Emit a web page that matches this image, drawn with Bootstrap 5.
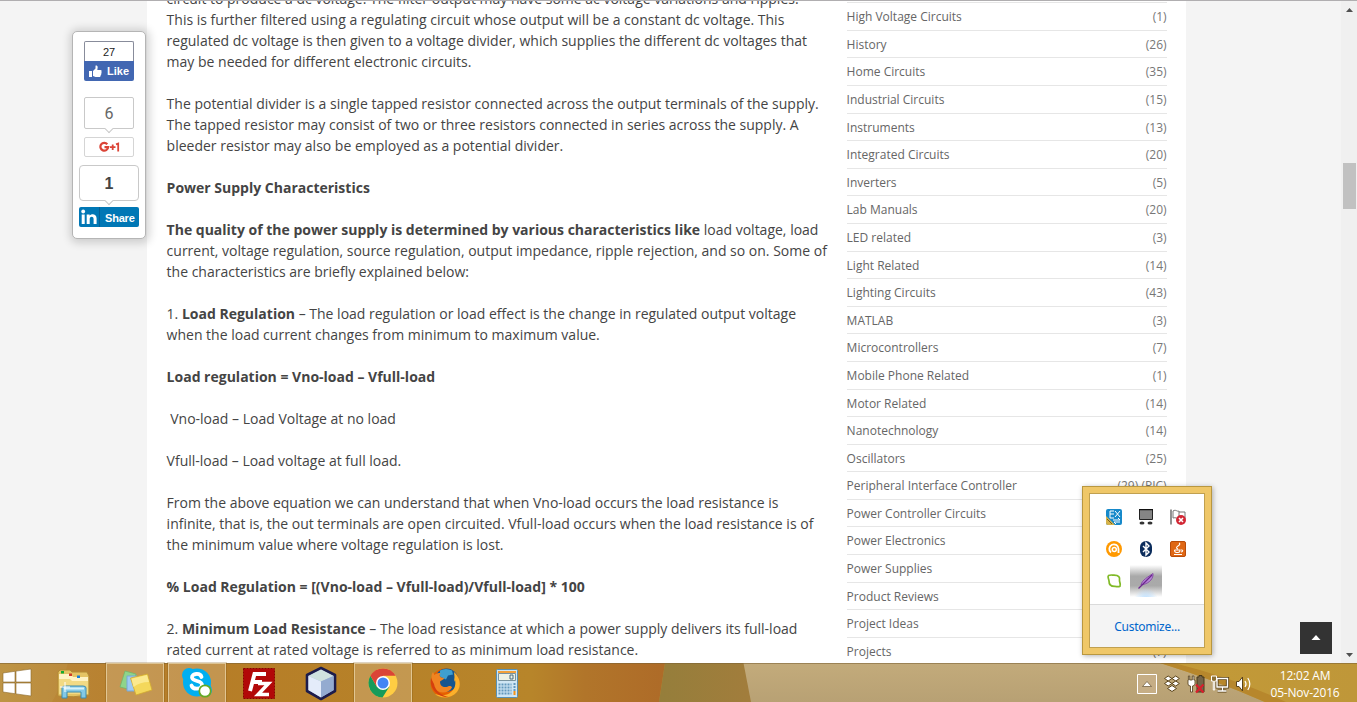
<!DOCTYPE html>
<html lang="en">
<head>
<meta charset="utf-8">
<title>Power Supply Characteristics</title>
<link href="https://cdn.jsdelivr.net/npm/bootstrap@5.3.0/dist/css/bootstrap.min.css" rel="stylesheet">
<script src="https://cdn.jsdelivr.net/npm/bootstrap@5.3.0/dist/js/bootstrap.bundle.min.js"></script>
<style>
html,body{height:702px;overflow:hidden}
body{font-family:"Open Sans","Noto Sans",sans-serif;background:#f4f4f4;width:1357px}
.browser{height:663px;border-top:1px solid #b0aeb0;overflow:hidden}
.sheet{width:1039px;margin-left:147px;padding:0 20px 0 19.6px;height:662px;overflow:hidden}
.article{width:680px;font-size:14px;line-height:21px;color:#444;margin-top:-13px;white-space:nowrap}
.article p{margin-bottom:21px}
.cats{width:320px;font-size:12px;color:#666;margin-top:-25.4px}
.cats li{height:27.6px;border-bottom:1px solid #e6e6e6;padding-top:1px;line-height:26px;white-space:nowrap}
.cats li span+span{color:#777}
.scroll{width:16px;background:#f0f0f0}
.thumb{width:13px;height:46px;margin:148px 1px 0 2px;background:#c1c1c1}
.share{left:72px;top:31px;width:74px;height:208px;border:1px solid #b5b5b5;border-radius:5px;box-shadow:1px 1px 8px 3px rgba(0,0,0,.16);font-family:"Liberation Sans",sans-serif}
.fbcount{width:50px;height:20px;border:1px solid #888c9b;border-bottom:0;border-radius:2px 2px 0 0;font-size:11px;line-height:21px;margin-top:9px;color:#222}
.fblike{width:50px;height:20px;background:#4267b2;border-radius:0 0 2px 2px;color:#fff;font-size:11px;font-weight:700;padding:0 5px}
.bubble{border:1px solid #c9c9c9;border-radius:2px;text-align:center}
.bubble:after{content:"";position:absolute;left:50%;bottom:-4px;width:6px;height:6px;margin-left:-3px;background:#fff;border:solid #c9c9c9;border-width:0 1px 1px 0;transform:rotate(45deg)}
.gcount{width:50px;height:32px;margin-top:16px;font:16px/31px Roboto,sans-serif;color:#666}
.gplus{width:50px;height:20px;margin-top:8px;border:1px solid #d5d5d5;border-radius:2px}
.incount{width:60px;height:36px;margin-top:8px;border-radius:4px;font-size:16px;font-weight:700;line-height:35px;color:#444}
.inshare{width:60px;height:20px;margin-top:6px;background:#0077b5;border-radius:2px;color:#fff;font-size:11px;font-weight:700}
.inshare span{border-left:1px solid #066094;padding-left:5px;line-height:22px;height:20px;letter-spacing:-.2px}
.totop{left:1300px;top:622px;width:32px;height:32px;background:#333}
.tray{left:1082px;top:486px;width:130px;height:169px;background:#efc768;border:1px solid #b9973f;padding:6px;box-shadow:1px 1px 5px rgba(0,0,0,.3)}
.panel{border:1px solid #c0a050;height:155px}
.icons{display:grid;grid-template-columns:repeat(3,32px);grid-auto-rows:32px;padding:7px 0 0 8px;height:110px}
.icons>div{display:flex;align-items:center;justify-content:center}
.hot{background:radial-gradient(circle at 50% 110%,#b5dcff 0,rgba(181,220,255,0) 12px),linear-gradient(#fff,#a9a9a9 35%,#aaa 65%,#fff)}
.custom{border-top:1px solid #dadada;background:#f4f4f4;height:43px;font-size:12px;line-height:43px;color:#06c;font-family:"Noto Sans",sans-serif;letter-spacing:-.25px}
.taskbar{height:39px;background:#b88a2e}
.wall{left:0;top:0}
.task{width:58px;height:39px;border:1px solid transparent;border-bottom:0}
.task.open{background:rgba(214,186,140,.4);border-color:rgba(235,213,168,.75);box-shadow:0 0 0 1px rgba(120,80,10,.25)}
.tasks{gap:4px}
.notif{left:1137px;top:0;height:39px;width:120px}
.clock{left:1262px;top:4px;width:86px;height:36px;color:#fff;font:12px/17px "Open Sans",sans-serif;letter-spacing:-.2px;text-align:center}
</style>
</head>
<body class="position-relative">
<div class="browser d-flex">
  <div class="sheet bg-white d-flex">
    <div class="article flex-shrink-0">
      <p>circuit to produce a dc voltage. The filter output may have some ac voltage variations and ripples.<br>This is further filtered using a regulating circuit whose output will be a constant dc voltage. This<br>regulated dc voltage is then given to a voltage divider, which supplies the different dc voltages that<br>may be needed for different electronic circuits.</p>
      <p>The potential divider is a single tapped resistor connected across the output terminals of the supply.<br>The tapped resistor may consist of two or three resistors connected in series across the supply. A<br>bleeder resistor may also be employed as a potential divider.</p>
      <p><b>Power Supply Characteristics</b></p>
      <p><b>The quality of the power supply is determined by various characteristics like</b> load voltage, load<br>current, voltage regulation, source regulation, output impedance, ripple rejection, and so on. Some of<br>the characteristics are briefly explained below:</p>
      <p>1. <b>Load Regulation</b> – The load regulation or load effect is the change in regulated output voltage<br>when the load current changes from minimum to maximum value.</p>
      <p><b>Load regulation = Vno-load – Vfull-load</b></p>
      <p>&nbsp;Vno-load – Load Voltage at no load</p>
      <p>Vfull-load – Load voltage at full load.</p>
      <p>From the above equation we can understand that when Vno-load occurs the load resistance is<br>infinite, that is, the out terminals are open circuited. Vfull-load occurs when the load resistance is of<br>the minimum value where voltage regulation is lost.</p>
      <p><b>% Load Regulation = [(Vno-load – Vfull-load)/Vfull-load] * 100</b></p>
      <p>2. <b>Minimum Load Resistance</b> – The load resistance at which a power supply delivers its full-load<br>rated current at rated voltage is referred to as minimum load resistance.</p>
    </div>
    <ul class="cats list-unstyled mb-0 flex-shrink-0">
      <li></li>
      <li class="d-flex justify-content-between"><span>High Voltage Circuits</span><span>(1)</span></li>
      <li class="d-flex justify-content-between"><span>History</span><span>(26)</span></li>
      <li class="d-flex justify-content-between"><span>Home Circuits</span><span>(35)</span></li>
      <li class="d-flex justify-content-between"><span>Industrial Circuits</span><span>(15)</span></li>
      <li class="d-flex justify-content-between"><span>Instruments</span><span>(13)</span></li>
      <li class="d-flex justify-content-between"><span>Integrated Circuits</span><span>(20)</span></li>
      <li class="d-flex justify-content-between"><span>Inverters</span><span>(5)</span></li>
      <li class="d-flex justify-content-between"><span>Lab Manuals</span><span>(20)</span></li>
      <li class="d-flex justify-content-between"><span>LED related</span><span>(3)</span></li>
      <li class="d-flex justify-content-between"><span>Light Related</span><span>(14)</span></li>
      <li class="d-flex justify-content-between"><span>Lighting Circuits</span><span>(43)</span></li>
      <li class="d-flex justify-content-between"><span>MATLAB</span><span>(3)</span></li>
      <li class="d-flex justify-content-between"><span>Microcontrollers</span><span>(7)</span></li>
      <li class="d-flex justify-content-between"><span>Mobile Phone Related</span><span>(1)</span></li>
      <li class="d-flex justify-content-between"><span>Motor Related</span><span>(14)</span></li>
      <li class="d-flex justify-content-between"><span>Nanotechnology</span><span>(14)</span></li>
      <li class="d-flex justify-content-between"><span>Oscillators</span><span>(25)</span></li>
      <li class="d-flex justify-content-between"><span>Peripheral Interface Controller</span><span>(29) (PIC)</span></li>
      <li class="d-flex justify-content-between"><span>Power Controller Circuits</span></li>
      <li class="d-flex justify-content-between"><span>Power Electronics</span></li>
      <li class="d-flex justify-content-between"><span>Power Supplies</span></li>
      <li class="d-flex justify-content-between"><span>Product Reviews</span></li>
      <li class="d-flex justify-content-between"><span>Project Ideas</span></li>
      <li class="d-flex justify-content-between"><span>Projects</span><span>(7)</span></li>
    </ul>
  </div>
  <div class="scroll ms-auto d-flex flex-column">
    <svg width="16" height="14"><path d="M5 11h7L8.500 7z" fill="#505050"/></svg>
    <div class="thumb"></div>
    <svg class="mt-auto" width="16" height="16"><path d="M5 6h7L8.500 10z" fill="#505050"/></svg>
  </div>
</div>

<div class="share position-absolute bg-white d-flex flex-column align-items-center">
  <div class="fbcount text-center">27</div>
  <div class="fblike d-flex align-items-center justify-content-between">
    <svg width="13" height="13" viewBox="0 0 13 13" fill="#fff"><path d="M0 6h3v6H0zM4 6l2.500-2.500V.8C7 0 8.700.5 8.700 2.200L8.300 5H11.500c1.300 0 1.500 1.400.7 1.900.8.500.6 1.600-.2 1.800.5.700.2 1.500-.5 1.700.3.800-.2 1.600-1.200 1.600H6.500L4 11z"/></svg>Like
  </div>
  <div class="bubble gcount position-relative">6</div>
  <div class="gplus d-flex align-items-center justify-content-center">
    <svg width="21" height="12" viewBox="0 0 21 12" fill="none" stroke="#db4437"><path d="M8.300 3.200A3.900 3.900 0 1 0 9.200 6.200H5.500" stroke-width="2.200"/><path d="M11 6.200h5.500M13.700 3.500v5.400" stroke-width="1.800"/><path d="M17 3.300l2.200-.8v8" stroke-width="1.800"/></svg>
  </div>
  <div class="bubble incount position-relative">1</div>
  <div class="inshare d-flex">
    <svg width="20" height="20" viewBox="0 0 20 20" fill="#fff"><circle cx="4.200" cy="4.500" r="1.900"/><path d="M2.700 7.500h3V17h-3zM7.700 7.500h2.900v1.300c1.500-2.400 7-2.200 7 2.500V17h-3v-5c0-3.200-3.900-2.900-3.900 0v5h-3z"/></svg>
    <span>Share</span>
  </div>
</div>

<div class="totop position-absolute"><svg class="d-block" width="32" height="32"><path d="M11.500 18L16 13l4.500 5z" fill="#fff"/></svg></div>

<div class="tray position-absolute">
  <div class="panel bg-white">
    <div class="icons">
      <div><svg width="16" height="16"><rect width="16" height="16" rx="2" fill="#1689ca"/><path d="M0 7l9 9H2q-2 0-2-2z" fill="#d7b34a"/><path d="M1 10l5 5" stroke="#765f22"/><path d="M4 2h4M4 5h4M4 9h4M4 2v7M9 2l5 6M14 2L9 8M7 11h7l-2-2M14 13H8l2 2" stroke="#fff" fill="none" stroke-width="1"/></svg></div>
      <div><svg width="16" height="16"><path d="M1.500.5h13v10h-13z" fill="#858585" stroke="#222"/><path d="M1 .5h14" stroke="#111" stroke-width="1.500"/><ellipse cx="4" cy="14" rx="2.500" ry="1.600" fill="#333"/><ellipse cx="12" cy="14" rx="2.500" ry="1.600" fill="#333"/></svg></div>
      <div><svg width="16" height="16"><path d="M1 .5v15" stroke="#777" stroke-width="1.600"/><path d="M3 2c3-2 4 1 6 0v7c-2 1-3-1-6 0zM9 3h6v7H9" fill="#fff" stroke="#777"/><circle cx="11" cy="11" r="5" fill="#d22735"/><path d="M9 9l4 4M13 9l-4 4" stroke="#fff" stroke-width="1.600"/></svg></div>
      <div><svg width="16" height="16"><circle cx="8" cy="8" r="8" fill="#f90"/><path d="M5 11.500A4.600 4.600 0 1 1 12.500 8v4" fill="none" stroke="#fff" stroke-width="1.800"/><circle cx="8.300" cy="8.500" r="2" fill="none" stroke="#fff" stroke-width="1.500"/></svg></div>
      <div><svg width="16" height="16"><rect x="2" width="12" height="16" rx="6" fill="#0b2c5c"/><path d="M5 5l6 6-3 3V2l3 3-6 6" fill="none" stroke="#fff" stroke-width="1.400"/></svg></div>
      <div><svg width="16" height="16"><rect x=".5" y=".5" width="15" height="15" rx="1.500" fill="#df6714" stroke="#b94c0a"/><path d="M9 2q2 1-1 3t0 3M4.500 9h5.500q0 2.500-2 2.500H6.500q-2 0-2-2.500M11 9c2.500-.5 2 2 0 2M4 13.500h8" fill="none" stroke="#fff" stroke-width="1.100"/></svg></div>
      <div><svg width="16" height="16"><path d="M2.500 2.500C5 1.500 6 2.200 8 2.200c5 0 6 2 5.500 5-.3 2 1.500 3 .5 6-2 1-3 .2-5 .2-5 0-6-2.400-6-5.400 0-2-2-4-.5-5.500z" fill="#fff" stroke="#80ba27" stroke-width="1.700"/></svg></div>
      <div class="hot"><svg width="16" height="16"><path d="M3 12C4 7 10 4 15 .5 15.500 5 12 10 5 11.500z" fill="#b98ad6" stroke="#7b3aa0" stroke-width=".8"/><path d="M.5 15.500L14 2" stroke="#6c268e" stroke-width="1.200"/></svg></div>
    </div>
    <div class="custom text-center">Customize...</div>
  </div>
</div>

<div class="taskbar position-relative">
  <svg class="wall position-absolute" width="1357" height="39" preserveAspectRatio="none">
    <defs>
      <linearGradient id="w1"><stop offset="0" stop-color="#bc9140"/><stop offset=".1" stop-color="#b98435"/><stop offset=".3" stop-color="#b67d27"/><stop offset=".8" stop-color="#b7852a"/><stop offset=".88" stop-color="#b1752a"/><stop offset="1" stop-color="#ae6b28"/></linearGradient>
      <linearGradient id="w2"><stop offset="0" stop-color="#957e3b"/><stop offset="1" stop-color="#a27d3c"/></linearGradient>
      <linearGradient id="w3" x1="0" y1="0" x2=".1" y2="1"><stop offset="0" stop-color="#c3ab7b"/><stop offset="1" stop-color="#b8a174"/></linearGradient>
      <linearGradient id="w4"><stop offset="0" stop-color="#c39a37"/><stop offset="1" stop-color="#bf9739"/></linearGradient>
    </defs>
    <path d="M0 0h665l-6 39H0z" fill="url(#w1)"/>
    <path d="M0 0h68Q63 20 52 39H0z" fill="#c5a052" opacity=".25"/>
    <path d="M665 0h79l8 39h-93z" fill="url(#w2)"/>
    <path d="M743.500 0H1357v39H751z" fill="url(#w3)"/>
    <path d="M1160 0h197v39h-92Q1215 17 1160 0z" fill="url(#w4)"/>
    <path d="M1160 0h14q60 15 112 39h-21Q1215 17 1160 0z" fill="#b7872c"/>
    <path d="M0 .5h1357" stroke="#7b6237" opacity=".55"/>
  </svg>
  <div class="tasks position-relative d-flex align-items-stretch">
    <div style="width:40px"><svg width="40" height="39"><path d="M3 10l12-1.700V19H3zM16 8.100L31 6v13H16zM3 20h12v10.700L3 29zM16 20h15v13l-15-2.100z" fill="#fff" stroke="#8c692c" stroke-width=".6"/></svg></div>
    <div class="task"><svg width="56" height="38"><path d="M13 8l2-2h10l2 2h15l2 4v19q-15 3-31 1z" fill="#e5c464" stroke="#b28a35"/><path d="M14 10h12l2 3h15v16H14z" fill="#fff3c4"/><path d="M16 7h3v2.500h-3z" fill="#14ab2e"/><path d="M24 9.500h3V12h-3z" fill="#d03a28"/><path d="M32 11.500h3V14h-3z" fill="#1980d8"/><path d="M14 15h11l2 2h16v13H14z" fill="#f2da84"/><path d="M17 24q0-2 3-2h18q3 0 3 2v10h-5v-6H22v6h-5z" fill="#83c9e6" stroke="#3f8caf"/><path d="M19 24.500h20" stroke="#d5f2fc" stroke-width="2"/><path d="M20 18v10M15 23h10" stroke="#fff"/></svg></div>
    <div class="task open"><svg width="56" height="38"><path d="M18 7l11 3-4 16-12-3z" fill="#8fd48a" stroke="#6bb56b" stroke-width=".7"/><path d="M20 12h10v15H20z" fill="#9ecaf3" stroke="#76a9d5"/><path d="M23.500 14l17-4 4.500 16-16 5z" fill="#f4d85b" stroke="#d2ab30" stroke-width=".8"/><path d="M24.500 14.700l15.500-3.700 2 7q-9 0-15.500 5z" fill="#fbe98f"/></svg></div>
    <div class="task open"><svg width="56" height="38"><circle cx="20" cy="11" r="7" fill="#00aff0"/><circle cx="28" cy="18.500" r="14" fill="#00aff0"/><circle cx="36" cy="26" r="7" fill="#00aff0"/><path d="M32.500 13c-1-4.500-10-3.700-9.500.6.600 4.400 10.500 2.500 10 7.500-.5 4.800-9.500 4.700-10.500.4" fill="none" stroke="#fff" stroke-width="3.800" stroke-linecap="round"/><circle cx="36" cy="27" r="5.700" fill="#fff" stroke="#65a923" stroke-width="1.700"/></svg></div>
    <div class="task"><svg width="56" height="38"><path d="M12.500 4.500h31v30h-31z" fill="#b20808" stroke="#8b0000" stroke-dasharray="2 1"/><path d="M19 27l4.500-17H35M22 18h9" fill="none" stroke="#fff" stroke-width="4"/><path d="M27 19.500h10.500L27 30.500h11" fill="none" stroke="#fff" stroke-width="3.500"/></svg></div>
    <div class="task"><svg width="56" height="38"><path d="M28 4l14 7v16l-14 8-14-8V11z" fill="#a5b7db" stroke="#1d1c4b" stroke-width="2.600" stroke-linejoin="round"/><path d="M28 5.500L40.500 12 28 17.500 15.500 12z" fill="#cfe1df"/><path d="M15.500 12L28 17.500V33.500L15.500 26z" fill="#e4ecfa"/><path d="M28 17.500L40.500 12v14L28 33.500z" fill="#94abd0"/></svg></div>
    <div class="task open"><svg width="56" height="38"><circle cx="28" cy="19" r="14.500" fill="#ffcd43"/><path d="M15.400 11.700A14.500 14.500 0 0 0 27.500 33.500L34.300 22.700 28 19 21.700 22.600z" fill="#169b5a"/><path d="M15.400 11.700L21.700 22.600 28 19v-7.300h12.600A14.500 14.500 0 0 0 15.400 11.700" fill="#db4437"/><circle cx="28" cy="19" r="7" fill="#fff"/><circle cx="28" cy="19" r="5.500" fill="#4285f4"/></svg></div>
    <div class="task"><svg width="56" height="38"><circle cx="28" cy="19" r="14.500" fill="#e66000"/><circle cx="29.500" cy="16" r="11.500" fill="#14558f"/><path d="M23 6.500q6-3 12 0l1 4-5 1-2 4-6-3z" fill="#3f9fd0"/><path d="M37 8c6 5 8 14 3 20-6 7-17 7-22 2 6 2 12 2 16-2 4-3 5-8 4-12l-1 2q1-5 0-10z" fill="#fbb02b"/><path d="M14.500 13c0-2 .5-4 1.500-5l1.500 3c2-2 4-2 6-2-1 2-1 3 0 4l4 1.500-4.500 3c0 5 4 6.500 8 5 2-1 4 0 4 1-3 6-13 7-17 1-3-4-3-7-3.500-11.500z" fill="#f08421"/><path d="M14 14c-2 12 9 20 18 19-7-1-14-6-15-13z" fill="#d5400e"/></svg></div>
    <div class="task"><svg width="56" height="38"><rect x="17.500" y="5.500" width="21" height="28" rx="1" fill="#cfe6f4" stroke="#5891b4"/><path d="M19 7h18v2H19z" fill="#f2a13a"/><path d="M19.500 9.500h17v7h-17z" fill="#eef2e4" stroke="#79939f"/><path d="M31 11h3v4h-3z" fill="none" stroke="#456a83"/><path d="M19.500 20.500h13M19.500 23.500h13M19.500 26.500h13M19.500 29.500h13" stroke="#6298bd" stroke-width="2" stroke-dasharray="2 1"/><path d="M35.500 19v8" stroke="#6298bd" stroke-width="2" stroke-dasharray="2 1"/><path d="M34.500 27h2v4h-2z" fill="#f39318"/></svg></div>
  </div>
  <svg class="notif position-absolute" viewBox="0 0 120 39">
    <path d="M.5 11.500h19v19H.5z" fill="#c6ae86" stroke="#fff"/><path d="M5.500 23.500l4.500-5 4.500 5z" fill="#fff" stroke="#655231" stroke-width=".7"/>
    <g stroke="#5c461c" stroke-width="1" fill="#fff" stroke-linejoin="round"><path d="M27.500 15.500l3.700-2.500 3.700 2.500-3.700 2.500zM35 15.500l3.700-2.500 3.700 2.500-3.700 2.500zM27.500 20.500l3.700-2.500 3.700 2.500-3.700 2.500zM35 20.500l3.700-2.500 3.700 2.500-3.700 2.500zM30.500 25.500l4.500-3 4.500 3-4.500 3z"/></g>
    <path d="M60 14h2v-1.500h3V14h2v15h-7z" fill="#746449" stroke="#483819"/><path d="M59 21.500l7.500 8M66.500 21.500l-7.500 8" stroke="#d91e2c" stroke-width="2.200"/>
    <path d="M52.700 13v4h2.600v-4h1.600v4H58v4q-.5 2-2.500 2v6h-2v-6q-2.500 0-2.500-2v-4h.4v-4z" fill="#fff" stroke="#4e3a18" stroke-width=".8"/>
    <g fill="none" stroke="#594115" stroke-width="3.200"><path d="M80 15.500h10.500v8.500H80zM80.500 28h9M85.500 24v4"/></g><g fill="none" stroke="#fff" stroke-width="1.400"><path d="M80 15.500h10.500v8.500H80zM80.500 28h9M85.500 24v4"/></g><path d="M74.500 13h5v5h-1.800v9h-1.400v-9h-1.800z" fill="#8d6f32" stroke="#fff"/>
    <path d="M99.500 18.500h2.500l3.500-4.500v14l-3.500-4.500h-2.500z" fill="#fff" stroke="#59431b"/><path d="M108 18q2 3 0 6M110.800 15q4 6 0 12" fill="none" stroke="#fff" stroke-width="1.200"/>
  </svg>
  <div class="clock position-absolute">12:02 AM<br>05-Nov-2016</div>
</div>
</body>
</html>
